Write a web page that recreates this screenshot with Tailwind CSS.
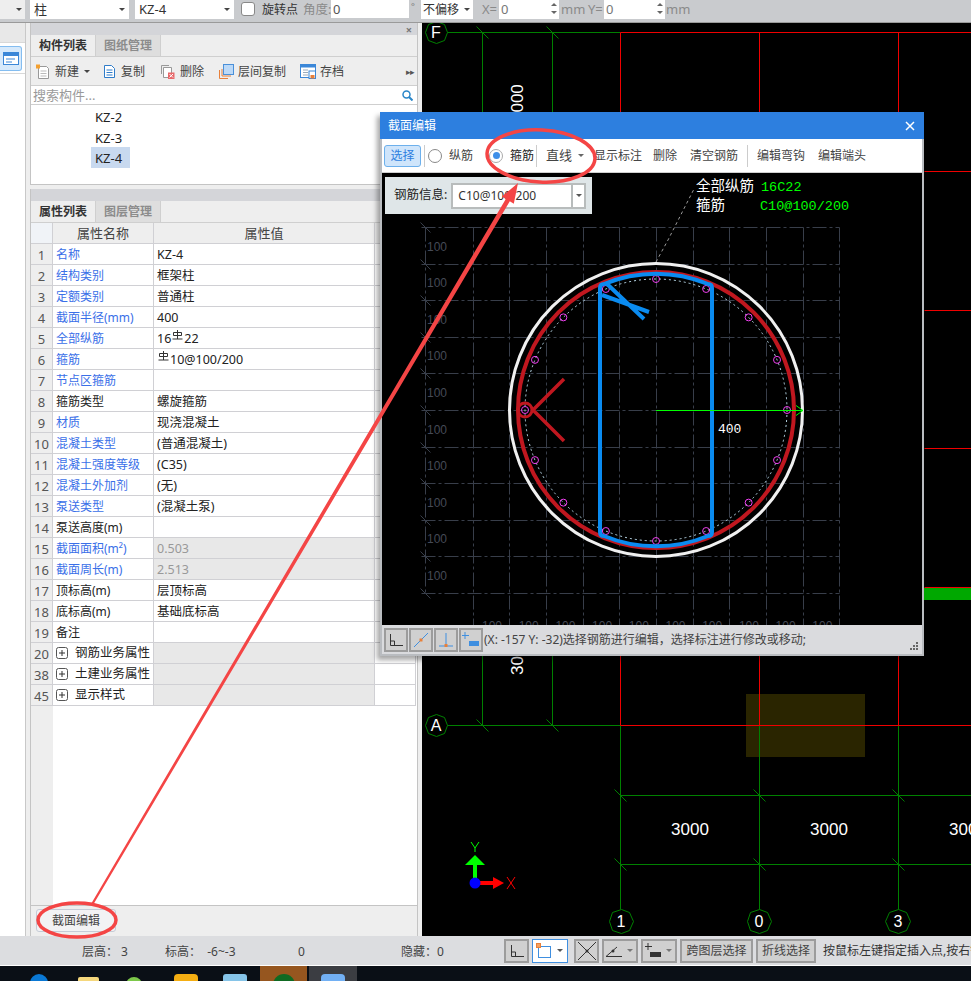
<!DOCTYPE html>
<html lang="zh-CN">
<head>
    <meta charset="UTF-8">
    <meta name="viewport" content="width=device-width, initial-scale=1.0">
    <title>截面编辑</title>
    <script src="https://cdn.jsdelivr.net/npm/@tailwindcss/browser@4"></script>
</head>
<body class="relative w-[971px] h-[981px] flex flex-col overflow-hidden bg-[#eeeeee] text-[12px] text-[#333] font-['Noto_Sans','Noto_Sans_CJK_SC',sans-serif]">

    <!-- top option bar -->
    <div class="h-[23px] shrink-0 flex items-start bg-[#c9cbce] border-b border-[#9a9a9a] text-[13px] *:shrink-0">
        <div class="w-[25px] h-[19px] bg-[#eeeeee] flex items-center justify-end pr-[3px]"><span class="border-x-[3px] border-t-[3px] border-x-transparent border-t-[#444]"></span></div>
        <div class="ml-[5px] w-[99px] h-[19px] bg-white flex items-center justify-between pl-[4px] pr-[4px]">柱<span class="border-x-[3px] border-t-[3px] border-x-transparent border-t-[#444]"></span></div>
        <div class="ml-[6px] w-[99px] h-[19px] bg-white flex items-center justify-between pl-[4px] pr-[4px]">KZ-4<span class="border-x-[3px] border-t-[3px] border-x-transparent border-t-[#444]"></span></div>
        <div class="ml-[7px] mt-[2px] w-[14px] h-[14px] bg-white border border-[#888] rounded-[3px]"></div>
        <div class="ml-[7px] w-[36px] leading-[19px] text-[12px] text-[#333]">旋转点</div>
        <div class="ml-[5px] w-[28px] leading-[19px] text-[12.500px] whitespace-nowrap text-[#8a8a8a]">角度:</div>
        <div class="w-[78px] h-[18px] bg-white leading-[18px] pl-[2px] text-[#555]">0</div>
        <div class="ml-[2px] w-[10px] leading-[14px] text-[9px] text-[#777]">°</div>
        <div class="w-[52px] h-[19px] bg-white flex items-center justify-between pl-[2px] pr-[3px] text-[12px]">不偏移<span class="border-x-[3px] border-t-[3px] border-x-transparent border-t-[#444]"></span></div>
        <div class="ml-[9px] w-[17px] leading-[19px] text-[#8a8a8a]">X=</div>
        <div class="w-[60px] h-[19px] bg-white flex justify-between pl-[2px] pr-[2px] leading-[18px] text-[#777]">0<span class="flex flex-col justify-center gap-[5px] h-[17px]"><i class="border-x-[3px] border-b-[3px] border-x-transparent border-b-[#666]"></i><i class="border-x-[3px] border-t-[3px] border-x-transparent border-t-[#666]"></i></span></div>
        <div class="ml-[2px] w-[27px] leading-[19px] text-[#8a8a8a]">mm</div>
        <div class="w-[16px] leading-[19px] text-[#8a8a8a]">Y=</div>
        <div class="w-[61px] h-[19px] bg-white flex justify-between pl-[2px] pr-[2px] leading-[18px] text-[#777]">0<span class="flex flex-col justify-center gap-[5px] h-[17px]"><i class="border-x-[3px] border-b-[3px] border-x-transparent border-b-[#666]"></i><i class="border-x-[3px] border-t-[3px] border-x-transparent border-t-[#666]"></i></span></div>
        <div class="ml-[1px] leading-[19px] text-[#8a8a8a]">mm</div>
    </div>

    <!-- main area -->
    <div class="flex-1 flex min-h-0">
        <!-- narrow nav strip -->
        <div class="w-[26px] shrink-0 bg-white border-r border-[#c8c8c8] flex flex-col">
            <div class="h-[20px] bg-[#e8e8e8] border-b border-[#d8d8d8]"></div>
            <div class="mt-[3px] w-[22px] h-[25px] bg-[#d6e9fb] border border-[#84bdf0] border-l-0 rounded-r-[3px] flex items-center justify-center">
                <svg width="16" height="13" viewBox="0 0 16 13"><rect x="0.5" y="0.5" width="15" height="12" fill="#fff" stroke="#3b87d8"/><rect x="0.5" y="0.5" width="15" height="3.5" fill="#3b87d8"/><path d="M3 7h9M3 10h6" stroke="#3b87d8"/></svg>
            </div>
            <div class="mt-[2px] border-b border-[#d8d8d8]"></div>
        </div>
        <div class="w-[4px] shrink-0"></div>

        <!-- side panels -->
        <div class="w-[388px] shrink-0 flex flex-col">
            <div class="h-[162px] shrink-0 flex flex-col border-x border-b border-[#c4c4c4]">
                <div class="h-[12px] bg-[#d4d5d9] flex items-center justify-end pr-[5px] text-[#777] text-[11px] leading-none font-bold">×</div>
                <div class="h-[22px] flex border-b border-[#cfcfcf] font-bold">
                    <div class="w-[65px] pt-[1px] bg-[#eeeeee] border-r border-[#cfcfcf] flex items-center justify-center text-[#333]">构件列表</div>
                    <div class="w-[65px] pt-[1px] bg-[#dedede] border-r border-[#cfcfcf] flex items-center justify-center text-[#8c8c8c]">图纸管理</div>
                </div>
                <div class="h-[29px] pt-[1px] flex items-center text-[#444] border-b border-[#cfcfcf]">
                    <svg class="ml-[4px]" width="15" height="16" viewBox="0 0 15 16"><path d="M3.5 2.5h8l2 2v10h-10z" fill="#fff" stroke="#999"/><path d="M5.5 7h6M5.5 9.500h6M5.500 12h6" stroke="#bbb"/><rect x="1" y="0.500" width="4" height="4" fill="#f4a030"/></svg>
                    <span class="ml-[5px]">新建</span>
                    <span class="ml-[5px] border-x-[3px] border-t-[3px] border-x-transparent border-t-[#444]"></span>
                    <svg class="ml-[13px]" width="13" height="15" viewBox="0 0 13 15"><path d="M1.500 1.500h7l3 3v9h-10z" fill="#fff" stroke="#2f7cc9"/><path d="M3.500 6h6M3.500 8.500h6M3.500 11h6" stroke="#2f7cc9"/></svg>
                    <span class="ml-[5px]">复制</span>
                    <svg class="ml-[15px]" width="15" height="15" viewBox="0 0 15 15"><path d="M3.500 3.500h8v10h-8z" fill="#fff" stroke="#999"/><path d="M1.500 10V1.500H9" fill="none" stroke="#999"/><rect x="8" y="8.500" width="6.500" height="6.500" fill="#e8686a"/><path d="M9.500 10l3.500 3.500M13 10l-3.500 3.500" stroke="#fff"/></svg>
                    <span class="ml-[5px]">删除</span>
                    <svg class="ml-[15px]" width="15" height="15" viewBox="0 0 15 15"><rect x="4.500" y="0.500" width="10" height="10" fill="#bcd9f7" stroke="#4a90d9"/><path d="M0.500 14.500V6M0.500 14.500H9M3 12V5M3 12h9" fill="none" stroke="#e8803a"/></svg>
                    <span class="ml-[4px]">层间复制</span>
                    <svg class="ml-[14px]" width="16" height="15" viewBox="0 0 16 15"><rect x="0.500" y="0.500" width="15" height="13" fill="#fff" stroke="#3b87d8"/><rect x="0.500" y="0.500" width="15" height="3" fill="#3b87d8"/><path d="M3 6h5M3 8.500h5M3 11h5" stroke="#9ab"/><rect x="9" y="7" width="6.500" height="7.500" fill="#fff" stroke="#3b87d8"/><rect x="10.500" y="11" width="4" height="3.500" fill="#e8803a"/></svg>
                    <span class="ml-[4px]">存档</span>
                    <span class="ml-auto mr-[3px] text-[9px] text-[#555] tracking-[-1px]">▸▸</span>
                </div>
                <div class="h-[19px] pt-[1px] bg-white flex items-center justify-between pl-[2px] pr-[4px] border-b border-[#cfcfcf] text-[#9a9a9a] text-[13px]">
                    <span>搜索构件...</span>
                    <svg width="11" height="11" viewBox="0 0 11 11"><circle cx="4.500" cy="4.500" r="3.500" fill="none" stroke="#2a86c8" stroke-width="1.500"/><path d="M7 7l3.500 3.500" stroke="#2a86c8" stroke-width="2"/></svg>
                </div>
                <div class="flex-1 bg-white pl-[60px] text-[13px] text-[#222]">
                    <div class="h-[21px] w-[39px] pl-[4px] leading-[24px]">KZ-2</div>
                    <div class="h-[21px] w-[39px] pl-[4px] leading-[24px]">KZ-3</div>
                    <div class="h-[21px] w-[39px] pl-[4px] leading-[22px] bg-[#c8d9ef]">KZ-4</div>
                </div>
            </div>
            <div class="h-[4px] shrink-0"></div>
            <div class="flex-1 flex flex-col min-h-0 border-x border-[#c4c4c4]">
                <div class="h-[12px] shrink-0 bg-[#d4d5d9]"></div>
                <div class="h-[22px] shrink-0 flex border-b border-[#cfcfcf] font-bold">
                    <div class="w-[65px] pt-[1px] bg-[#eeeeee] border-r border-[#cfcfcf] flex items-center justify-center text-[#333]">属性列表</div>
                    <div class="w-[65px] pt-[1px] bg-[#dedede] border-r border-[#cfcfcf] flex items-center justify-center text-[#8c8c8c]">图层管理</div>
                </div>
                <div class="flex-1 flex flex-col min-h-0 bg-white border-b border-[#c4c4c4]">
                    <div id="prop-table" class="grid grid-cols-[22px_101px_221px_41px] w-[385px]">
                        <div class="h-[21px] bg-[#f0f3f7] border-r border-b border-[#d0d0d4]"></div>
                        <div class="h-[21px] bg-[#eeeeee] border-r border-b border-[#d0d0d4] text-center leading-[21px] text-[#444] text-[13px]">属性名称</div>
                        <div class="h-[21px] bg-[#eeeeee] border-r border-b border-[#d0d0d4] text-center leading-[21px] text-[#444] text-[13px]">属性值</div>
                        <div class="h-[21px] bg-[#eeeeee] border-r border-b border-[#d0d0d4]"></div>
                    </div>
                    <div class="flex-1 flex"><div class="w-[22px] bg-[#eeeeee]"></div></div>
                </div>
                <div class="h-[30px] shrink-0 pl-[5px] pt-[3px]">
                    <div class="w-[80px] h-[23px] bg-[#f2f2f4] border border-[#c5cbd6] rounded-[3px] text-center leading-[22px] text-[#444]">截面编辑</div>
                </div>
            </div>
        </div>
        <div class="w-[4px] shrink-0"></div>

        <!-- drawing area -->
        <div class="flex-1 bg-black min-w-0">
            <svg width="549" height="913" viewBox="422 23 549 913" class="block">
                <rect x="746" y="694" width="119" height="63" fill="#2a2500"/>
                <g fill="none" stroke="#008000" transform="translate(.5 .5)">
                    <path d="M447 32H620M447 725H620"/>
                    <path d="M482 32V725M552 32V725"/>
                    <path d="M476 26l12 12M546 26l12 12M476 719l12 12M546 719l12 12"/>
                    <path d="M620 725V909M759 725V909M898 725V909"/>
                    <path d="M620 795H971M620 864H971"/>
                    <path d="M614 789l12 12M753 789l12 12M892 789l12 12M614 858l12 12M753 858l12 12M892 858l12 12"/>
                    <polygon points="436,21 444,24 447,32 444,40 436,43 428,40 425,32 428,24"/>
                    <polygon points="436,714 444,717 447,725 444,733 436,736 428,733 425,725 428,717"/>
                    <polygon points="621,909 629,912 633,921 629,930 621,933 612,930 609,921 612,912"/>
                    <polygon points="759,909 767,912 771,921 767,930 759,933 750,930 747,921 750,912"/>
                    <polygon points="898,909 906,912 910,921 906,930 898,933 889,930 885,921 889,912"/>
                </g>
                <path transform="translate(.5 .5)" d="M620 32H971M620 32V725M759 32V725M898 32V725M620 725H971M924 171H971M924 310H971M924 448H971M924 587H971" fill="none" stroke="#f00000"/>
                <rect x="924" y="588" width="47" height="12" fill="#00a800"/>
                <g fill="#fff" font-family="Liberation Sans, sans-serif" font-size="16" text-anchor="middle">
                    <text x="436" y="38">F</text>
                    <text x="436" y="731">A</text>
                    <text x="621" y="927">1</text>
                    <text x="759" y="927">0</text>
                    <text x="898" y="927">3</text>
                    <text x="690" y="835" font-size="17">3000</text>
                    <text x="829" y="835" font-size="17">3000</text>
                    <text x="968" y="835" font-size="17">3000</text>
                    <text transform="translate(523 122) rotate(-90)" text-anchor="start" font-size="17">3000</text>
                    <text transform="translate(523 675) rotate(-90)" text-anchor="start" font-size="17">3000</text>
                </g>
                <path d="M475 883V862" stroke="#00ff00" stroke-width="4"/>
                <polygon points="475,855 485,865 465,865" fill="#00ff00"/>
                <path d="M475 883H494" stroke="#ff0000" stroke-width="4"/>
                <polygon points="504,883 493,877 493,889" fill="#ff0000"/>
                <circle cx="475" cy="883" r="5.500" fill="#0000ff"/>
                <path d="M471 842l4 6 4-6M475 848v4" fill="none" stroke="#00ff00"/>
                <path d="M507 877l8 12M515 877l-8 12" fill="none" stroke="#ff0000"/>
            </svg>
        </div>
    </div>

    <!-- status bar -->
    <div class="h-[29px] shrink-0 flex items-center bg-[#dcdde0] text-[#444] *:shrink-0">
        <span class="pl-[82px] pt-[2px] w-[165px]">层高：&nbsp;3</span>
        <span class="w-[133px] pt-[2px]">标高：&nbsp;&nbsp;-6~-3</span>
        <span class="w-[103px] pt-[2px]">0</span>
        <span class="w-[103px] pt-[2px]">隐藏：0</span>
        <div class="w-[25px] h-[24px] bg-[#d0d0d0] border-2 border-[#9c9c9c] flex items-center justify-center">
            <svg width="14" height="14" viewBox="0 0 14 14"><path d="M1.500 1v11.500H14M1.500 8h4v4.500" fill="none" stroke="#333"/></svg>
        </div>
        <div class="ml-[3px] w-[36px] h-[24px] bg-white border border-[#3f8fe0] flex items-center justify-between pl-[3px] pr-[4px]">
            <svg width="15" height="15" viewBox="0 0 15 15"><rect x="2.500" y="3.500" width="12" height="11" fill="#fff" stroke="#3f8fe0"/><rect x="0.500" y="0.500" width="4" height="4" fill="#f4a060" stroke="#e8803a"/></svg>
            <span class="border-x-[3px] border-t-[3px] border-x-transparent border-t-[#555]"></span>
        </div>
        <div class="ml-[6px] w-[25px] h-[24px] bg-[#d0d0d0] border-2 border-[#9c9c9c] flex items-center justify-center">
            <svg width="20" height="20" viewBox="0 0 20 20"><path d="M1 1l18 18M19 1L1 19" stroke="#333"/><circle cx="10" cy="10" r="1.500" fill="#333"/></svg>
        </div>
        <div class="ml-[3px] w-[36px] h-[24px] bg-[#d0d0d0] border-2 border-[#9c9c9c] flex items-center justify-between pl-[2px] pr-[3px]">
            <svg width="17" height="14" viewBox="0 0 17 14"><path d="M0 12.500h16M0 12.500L11 3" fill="none" stroke="#333"/><circle cx="7" cy="7" r="1.500" fill="#333"/></svg>
            <span class="border-x-[3px] border-t-[3px] border-x-transparent border-t-[#777]"></span>
        </div>
        <div class="ml-[3px] w-[36px] h-[24px] bg-[#d0d0d0] border-2 border-[#9c9c9c] flex items-center justify-between pl-[2px] pr-[3px]">
            <svg width="17" height="16" viewBox="0 0 17 16"><path d="M3 0v7M0 3.500h7" stroke="#333"/><rect x="5" y="9" width="11" height="5" fill="#333"/></svg>
            <span class="border-x-[3px] border-t-[3px] border-x-transparent border-t-[#777]"></span>
        </div>
        <div class="ml-[3px] w-[73px] h-[24px] bg-[#d0d0d0] border-2 border-[#9c9c9c] text-center leading-[20px]">跨图层选择</div>
        <div class="ml-[3px] w-[60px] h-[24px] bg-[#d0d0d0] border-2 border-[#9c9c9c] text-center leading-[20px]">折线选择</div>
        <span class="ml-[7px] whitespace-nowrap text-[#333]">按鼠标左键指定插入点,按右键确定</span>
    </div>
    <div class="h-[1px] shrink-0 bg-white"></div>

    <!-- task bar, only the tops of the icons are on screen -->
    <div class="h-[15px] shrink-0 flex bg-[#0a0f16] overflow-hidden">
        <div class="ml-[30px] mt-[8px] w-[18px] h-[18px] rounded-full bg-[#0a78d4]"></div>
        <div class="ml-[30px] mt-[11px] w-[21px] h-[12px] bg-[#f5d77c] rounded-t-[2px]"></div>
        <div class="ml-[27px] mt-[11px] w-[16px] h-[16px] rounded-full bg-[#7cc84a]"></div>
        <div class="ml-[32px] mt-[8px] w-[24px] h-[20px] rounded-[4px] bg-[#f5ae12]"></div>
        <div class="ml-[25px] mt-[8px] w-[24px] h-[20px] rounded-[3px] bg-[#86c4e8]"></div>
        <div class="ml-[13px] w-[47px] bg-[#96561f] flex justify-center"><div class="mt-[8px] w-[22px] h-[22px] rounded-full bg-[#0f6a22]"></div></div>
        <div class="ml-[2px] w-[48px] bg-[#3b3d42] flex justify-center"><div class="mt-[8px] w-[24px] h-[20px] rounded-[4px] bg-[#72b0f4]"></div></div>
    </div>

    <!-- section editor dialog -->
    <div class="absolute left-[380px] top-[112px] w-[544px] h-[544px] flex flex-col bg-[#dadbde] border-x-2 border-b-2 border-[#b9bcc0] shadow-[-3px_4px_5px_rgba(0,0,0,0.35)]">
        <div class="h-[27px] shrink-0 -mx-[2px] bg-[#2d7fdf] flex items-center justify-between pl-[8px] pr-[9px] pt-[1px] text-white text-[12px]">
            <span>截面编辑</span>
            <svg width="10" height="10" viewBox="0 0 10 10"><path d="M1 1l8 8M9 1l-8 8" stroke="#fff" stroke-width="1.500"/></svg>
        </div>
        <div class="h-[34px] shrink-0 bg-white flex items-center pl-[2px] text-[#444] border-b border-[#cfcfcf]">
            <div class="w-[37px] h-[22px] bg-[#cfe5fb] border border-[#6db0ec] rounded-[3px] text-center leading-[20px] text-[#2d7fdf]">选择</div>
            <div class="ml-[3px] w-[1px] h-[22px] bg-[#ccc]"></div>
            <div class="ml-[3px] w-[14px] h-[14px] rounded-full border border-[#888]"></div>
            <span class="ml-[7px]">纵筋</span>
            <div class="ml-[16px] w-[14px] h-[14px] rounded-full border border-[#aaa] flex items-center justify-center"><i class="w-[7px] h-[7px] rounded-full bg-[#3f8fe8]"></i></div>
            <span class="ml-[7px] text-[#222]">箍筋</span>
            <div class="ml-[2px] w-[1px] h-[22px] bg-[#ccc]"></div>
            <span class="ml-[9px] text-[13px]">直线</span>
            <span class="ml-[6px] border-x-[3px] border-t-[3px] border-x-transparent border-t-[#666]"></span>
            <span class="ml-[10px]">显示标注</span>
            <span class="ml-[11px]">删除</span>
            <span class="ml-[13px]">清空钢筋</span>
            <div class="ml-[9px] w-[1px] h-[22px] bg-[#ccc]"></div>
            <span class="ml-[9px]">编辑弯钩</span>
            <span class="ml-[13px]">编辑端头</span>
        </div>
        <div class="relative h-[452px] shrink-0 bg-black overflow-hidden">
            <svg id="section" width="540" height="452" viewBox="382 173 540 452" class="block">
                <g id="grid" fill="none" stroke="#383e4a" stroke-dasharray="14 3 3 3" transform="translate(.5 .5)"></g>
                <g id="grid-labels" fill="#454a56" font-family="Liberation Sans, sans-serif" font-size="12"></g>
                <path d="M656 262L668 240L694 189" fill="none" stroke="#9a9a9a" stroke-dasharray="3 3"/>
                <circle cx="656" cy="410" r="146.500" fill="none" stroke="#f0f0f0" stroke-width="3"/>
                <circle cx="656" cy="410" r="138" fill="none" stroke="#c0171f" stroke-width="4"/>
                <circle cx="656" cy="410" r="131" fill="none" stroke="#b8d8e8" stroke-dasharray="2 3"/>
                <g id="bars" fill="none" stroke="#f040f0"></g>
                <circle cx="525" cy="410" r="7" fill="none" stroke="#c0171f" stroke-width="3"/>
                <path d="M533 410L564 379M533 410L564 441" fill="none" stroke="#c0171f" stroke-width="3.500"/>
                <path d="M600 288V532Q600 536 604 536A136 136 0 0 0 708 536Q712 536 712 532V288Q712 284 708 284A136 136 0 0 0 604 284Q600 284 600 288Z" fill="none" stroke="#0a8bf0" stroke-width="4"/>
                <path d="M606 283L644 319M602 295L649 312" fill="none" stroke="#0a8bf0" stroke-width="4"/>
                <path d="M656 410.500H803M796 405.500l7 5-7 5" fill="none" stroke="#00ff00"/>
                <text x="718" y="433" fill="#fff" font-family="Liberation Mono, monospace" font-size="13">400</text>
                <g font-family="Noto Sans CJK SC, sans-serif" font-size="14.500" fill="#fff">
                    <text x="696" y="191">全部纵筋</text>
                    <text x="696" y="210">箍筋</text>
                </g>
                <g font-family="Liberation Mono, monospace" font-size="13.500" fill="#00ff00">
                    <text x="761" y="191">16C22</text>
                    <text x="760" y="210">C10@100/200</text>
                </g>
            </svg>
            <div class="absolute left-[3px] top-[4px] w-[207px] h-[37px] bg-[#dfe6e8] flex items-center pl-[9px] text-[#222]">
                <span class="text-[12.500px]">钢筋信息:</span>
                <div class="ml-[4px] w-[135px] h-[26px] bg-white border-2 border-[#b8bcbc] flex items-center justify-between pl-[5px] text-[#333]">
                    <span class="text-[12px]">C10@100/200</span>
                    <div class="w-[13px] h-full border-l-2 border-[#b8bcbc] flex items-center justify-center"><span class="border-x-[3px] border-t-[3px] border-x-transparent border-t-[#555]"></span></div>
                </div>
            </div>
        </div>
        <div class="flex-1 flex items-center relative pl-[2px] text-[#444]">
            <div class="w-[24px] h-[24px] bg-[#d0d0d0] border-2 border-[#9c9c9c] flex items-center justify-center">
                <svg width="14" height="14" viewBox="0 0 14 14"><path d="M1.500 1v11.500H14M1.500 8h4v4.500" fill="none" stroke="#333"/></svg>
            </div>
            <div class="ml-[1px] w-[24px] h-[24px] bg-[#d0d0d0] border-2 border-[#9c9c9c] flex items-center justify-center">
                <svg width="16" height="16" viewBox="0 0 16 16"><path d="M1 15L15 1" stroke="#3f8fe0"/><rect x="6.500" y="6.500" width="3" height="3" fill="#e8803a"/></svg>
            </div>
            <div class="ml-[1px] w-[24px] h-[24px] bg-[#d0d0d0] border-2 border-[#9c9c9c] flex items-center justify-center">
                <svg width="16" height="16" viewBox="0 0 16 16"><path d="M8 1v13M1 14h14" stroke="#3f8fe0"/><rect x="6.500" y="12" width="3" height="3" fill="#e8803a"/></svg>
            </div>
            <div class="ml-[1px] w-[24px] h-[24px] bg-[#d0d0d0] border-2 border-[#9c9c9c] flex items-center justify-center">
                <svg width="18" height="16" viewBox="0 0 18 16"><path d="M3 0v7M0 3.500h7" stroke="#3f8fe0"/><rect x="7" y="9" width="10" height="5" fill="#3f8fe0"/></svg>
            </div>
            <span class="ml-[1px] whitespace-nowrap">(X: -157 Y: -32)选择钢筋进行编辑，选择标注进行修改或移动;</span>
            <svg class="absolute right-[3px] bottom-[3px]" width="9" height="9" viewBox="0 0 9 9" fill="#666"><rect x="6" y="0" width="2" height="2"/><rect x="3" y="3" width="2" height="2"/><rect x="6" y="3" width="2" height="2"/><rect x="0" y="6" width="2" height="2"/><rect x="3" y="6" width="2" height="2"/><rect x="6" y="6" width="2" height="2"/></svg>
        </div>
    </div>

    <!-- red markup drawn over the whole screenshot -->
    <svg class="absolute left-0 top-0 pointer-events-none" width="971" height="981" viewBox="0 0 971 981">
        <ellipse cx="541" cy="156" rx="54" ry="26" transform="rotate(3 541 156)" fill="none" stroke="#f44545" stroke-width="3.500"/>
        <ellipse cx="77" cy="920" rx="39" ry="17" fill="none" stroke="#f44545" stroke-width="3.500"/>
        <polygon points="91,904 93,905 509.800,201.300 513.800,203.800 518,183 501.800,196.600 505.800,199" fill="#f44545"/>
    </svg>

    <script>
        const symbol = '<svg class="inline-block align-[3px] mx-[1px]" width="11" height="10" viewBox="0 0 11 10"><path d="M1.500 5.500V2.500H9.500V5.500H1.500M5.500 0V9M0.500 9H10.500" fill="none" stroke="#333"/></svg>';
        const rows = [
            [1, '名称', 'KZ-4', 1], [2, '结构类别', '框架柱', 1], [3, '定额类别', '普通柱', 1],
            [4, '截面半径(mm)', '400', 1], [5, '全部纵筋', '16' + symbol + '22', 1], [6, '箍筋', symbol + '10@100/200', 1],
            [7, '节点区箍筋', '', 1], [8, '箍筋类型', '螺旋箍筋', 0], [9, '材质', '现浇混凝土', 1],
            [10, '混凝土类型', '(普通混凝土)', 1], [11, '混凝土强度等级', '(C35)', 1], [12, '混凝土外加剂', '(无)', 1],
            [13, '泵送类型', '(混凝土泵)', 1], [14, '泵送高度(m)', '', 0], [15, '截面面积(m²)', '0.503', 2],
            [16, '截面周长(m)', '2.513', 2], [17, '顶标高(m)', '层顶标高', 0], [18, '底标高(m)', '基础底标高', 0],
            [19, '备注', '', 0], [20, '钢筋业务属性', '', 3], [38, '土建业务属性', '', 3], [45, '显示样式', '', 3]
        ];
        const cell = 'h-[21px] border-r border-b border-[#d0d0d4] leading-[22px] ';
        const plus = '<svg class="mr-[7px] shrink-0" width="12" height="12" viewBox="0 0 12 12"><rect x="0.500" y="0.500" width="11" height="11" rx="2" fill="#fff" stroke="#555"/><path d="M3 6h6M6 3v6" stroke="#333"/></svg>';
        let html = '';
        rows.forEach(([no, name, value, kind]) => {
            const nameCell = kind === 3
                ? `<div class="${cell}flex items-center pl-[3px] text-[#222] text-[12.500px]">${plus}${name}</div>`
                : `<div class="${cell}pl-[3px] text-[12px] ${kind === 0 ? 'text-[#222]' : 'text-[#3a6fe8]'}">${name}</div>`;
            const valueClass = kind === 2 ? 'bg-[#e8e8e8] text-[#999]' : kind === 3 ? 'bg-[#e8e8e8]' : 'text-[#222]';
            html += `<div class="${cell}bg-[#eeeeee] text-center text-[13px] text-[#555]">${no}</div>`;
            html += nameCell;
            html += `<div class="${cell}pl-[3px] text-[12.500px] ${valueClass}">${value}</div>`;
            html += `<div class="${cell}"></div>`;
        });
        document.getElementById('prop-table').insertAdjacentHTML('beforeend', html);

        // reinforcement grid of the section view, in screen coordinates
        const ns = 'http://www.w3.org/2000/svg';
        const add = (parent, tag, attrs, text) => {
            const el = document.createElementNS(ns, tag);
            Object.entries(attrs).forEach(([k, v]) => el.setAttribute(k, v));
            if (text) el.textContent = text;
            parent.appendChild(el);
        };
        const grid = document.getElementById('grid');
        const labels = document.getElementById('grid-labels');
        for (let i = 0; i <= 10; i++) {
            const y = Math.round(227 + i * 36.6);
            add(grid, 'path', { d: `M421 ${y}H839` });
            add(grid, 'path', { d: `M420 ${y - 5}l10 10`, 'stroke-dasharray': 'none' });
            if (i > 0) add(labels, 'text', { x: 427, y: y - 13 }, '100');
        }
        [425, 473, 509, 546, 583, 619, 656, 693, 729, 766, 803, 839].forEach(x => {
            add(grid, 'path', { d: `M${x} 227V${x === 425 ? 593 : 632}` });
        });
        for (let i = 0; i < 10; i++) add(labels, 'text', { x: 482 + i * 36.7, y: 630 }, '100');
        const bars = document.getElementById('bars');
        for (let i = 0; i < 16; i++) {
            const a = i * Math.PI / 8;
            add(bars, 'circle', { cx: 656 + 131 * Math.cos(a), cy: 410 + 131 * Math.sin(a), r: 3.5 });
        }
    </script>
</body>
</html>
